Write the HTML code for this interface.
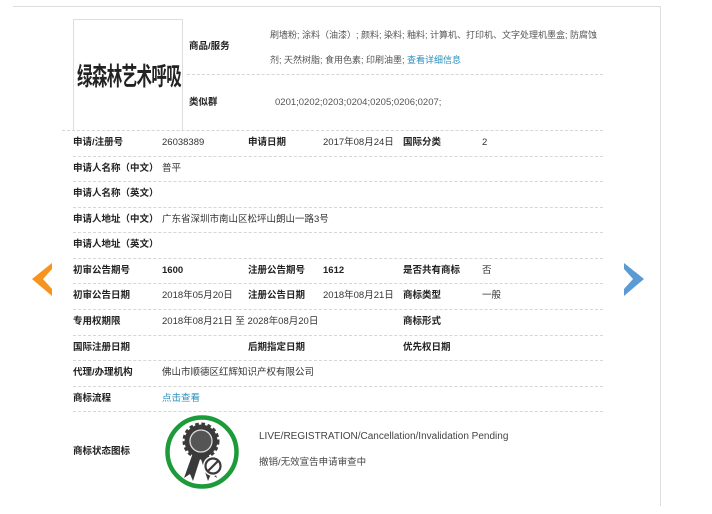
<!DOCTYPE html>
<html><head><meta charset="utf-8"><style>
*{margin:0;padding:0;box-sizing:border-box}
body{width:712px;height:514px;background:#fff;position:relative;overflow:hidden;font-family:"Liberation Sans","Noto Sans CJK SC",sans-serif;font-size:9.5px;line-height:12px;color:#333}
.a{position:absolute;white-space:nowrap}
.a span,.a{vertical-align:baseline}
.b{font-weight:bold;color:#222}
.hl{position:absolute;left:73px;width:530px;border-top:1px dashed #d6d6d6;height:0}
.lk{color:#2a8fbd}
</style></head><body>
<div class="a" style="left:13px;top:6px;width:648px;border-top:1px solid #ddd"></div>
<div class="a" style="left:660px;top:6px;height:500px;border-left:1px solid #ddd"></div>

<div class="a" style="left:73px;top:19px;width:110px;height:111px;border:1px solid #ddd;border-bottom:none"></div>
<div class="a" style="left:77px;top:60px;font-size:25px;line-height:30px;font-weight:bold;color:#222;letter-spacing:-1px;font-family:'Noto Sans CJK SC',sans-serif;transform:scaleX(0.62);transform-origin:left">绿森林艺术呼吸</div>

<div class="a b" style="left:189px;top:41px">商品/服务</div>
<div class="a" style="left:270px;top:29px;color:#555;font-size:9px">刷墙粉; 涂料（油漆）; 颜料; 染料; 釉料; 计算机、打印机、文字处理机墨盒; 防腐蚀</div>
<div class="a" style="left:270px;top:54px;color:#555;font-size:9px">剂; 天然树脂; 食用色素; 印刷油墨; <span class="lk">查看详细信息</span></div>
<div class="a" style="left:187px;top:74px;width:416px;border-top:1px dashed #d6d6d6"></div>
<div class="a b" style="left:189px;top:97px">类似群</div>
<div class="a" style="left:275px;top:97px;color:#555">0201;0202;0203;0204;0205;0206;0207;</div>
<div class="a" style="left:62px;top:130px;width:541px;border-top:1px dashed #d6d6d6"></div>

<div class="a b" style="left:73px;top:137px">申请/注册号</div><div class="a" style="left:162px;top:137px">26038389</div>
<div class="a b" style="left:248px;top:137px">申请日期</div><div class="a" style="left:323px;top:137px">2017年08月24日</div>
<div class="a b" style="left:403px;top:137px">国际分类</div><div class="a" style="left:482px;top:137px">2</div>
<div class="hl" style="top:156px"></div>
<div class="a b" style="left:73px;top:163px">申请人名称（中文）</div><div class="a" style="left:162px;top:163px">普平</div>
<div class="hl" style="top:181px"></div>
<div class="a b" style="left:73px;top:188px">申请人名称（英文）</div>
<div class="hl" style="top:207px"></div>
<div class="a b" style="left:73px;top:214px">申请人地址（中文）</div><div class="a" style="left:162px;top:214px">广东省深圳市南山区松坪山朗山一路3号</div>
<div class="hl" style="top:232px"></div>
<div class="a b" style="left:73px;top:239px">申请人地址（英文）</div>
<div class="hl" style="top:258px"></div>
<div class="a b" style="left:73px;top:265px">初审公告期号</div><div class="a b" style="left:162px;top:265px">1600</div>
<div class="a b" style="left:248px;top:265px">注册公告期号</div><div class="a b" style="left:323px;top:265px">1612</div>
<div class="a b" style="left:403px;top:265px">是否共有商标</div><div class="a" style="left:482px;top:265px">否</div>
<div class="hl" style="top:283px"></div>
<div class="a b" style="left:73px;top:290px">初审公告日期</div><div class="a" style="left:162px;top:290px">2018年05月20日</div>
<div class="a b" style="left:248px;top:290px">注册公告日期</div><div class="a" style="left:323px;top:290px">2018年08月21日</div>
<div class="a b" style="left:403px;top:290px">商标类型</div><div class="a" style="left:482px;top:290px">一般</div>
<div class="hl" style="top:309px"></div>
<div class="a b" style="left:73px;top:316px">专用权期限</div><div class="a" style="left:162px;top:316px">2018年08月21日 至 2028年08月20日</div>
<div class="a b" style="left:403px;top:316px">商标形式</div>
<div class="hl" style="top:335px"></div>
<div class="a b" style="left:73px;top:342px">国际注册日期</div>
<div class="a b" style="left:248px;top:342px">后期指定日期</div>
<div class="a b" style="left:403px;top:342px">优先权日期</div>
<div class="hl" style="top:360px"></div>
<div class="a b" style="left:73px;top:367px">代理/办理机构</div><div class="a" style="left:162px;top:367px">佛山市顺德区红辉知识产权有限公司</div>
<div class="hl" style="top:386px"></div>
<div class="a b" style="left:73px;top:393px">商标流程</div><div class="a lk" style="left:162px;top:393px">点击查看</div>
<div class="hl" style="top:411px"></div>
<div class="a b" style="left:73px;top:446px">商标状态图标</div>
<svg class="a" style="left:160px;top:410px" width="85" height="85" viewBox="160 410 85 85">
<circle cx="202" cy="452" r="34.5" fill="none" stroke="#1d9a3a" stroke-width="4.5"/>
<path d="M194 450 L184 478 L190 474 L193 481 L201 456 Z M207 450 L217 478 L211 474 L208 481 L200 456Z" fill="#3a3a3a"/>
<circle cx="201" cy="441" r="16.5" fill="#3a3a3a" stroke="#3a3a3a" stroke-width="4" stroke-dasharray="3.5 2.5"/>
<circle cx="201" cy="441" r="11" fill="#555" stroke="#ddd" stroke-width="1.3"/>
<circle cx="213" cy="466" r="10" fill="#fff"/>
<circle cx="213" cy="466" r="7.5" fill="none" stroke="#3a3a3a" stroke-width="2.2"/>
<line x1="208" y1="471" x2="218" y2="461" stroke="#3a3a3a" stroke-width="2.2"/>
</svg>
<div class="a" style="left:259px;top:431px;font-size:10px;color:#444">LIVE/REGISTRATION/Cancellation/Invalidation Pending</div>
<div class="a" style="left:259px;top:457px;color:#444">撤销/无效宣告申请审查中</div>

<svg class="a" style="left:28px;top:260px" width="26" height="38"><polygon points="24,3 4,19 24,36 24,29 15,19 24,9" fill="#f7941d"/></svg>
<svg class="a" style="left:622px;top:260px" width="26" height="38"><polygon points="2,3 22,19 2,36 2,29 11,19 2,9" fill="#5b9bd5"/></svg>
</body></html>
